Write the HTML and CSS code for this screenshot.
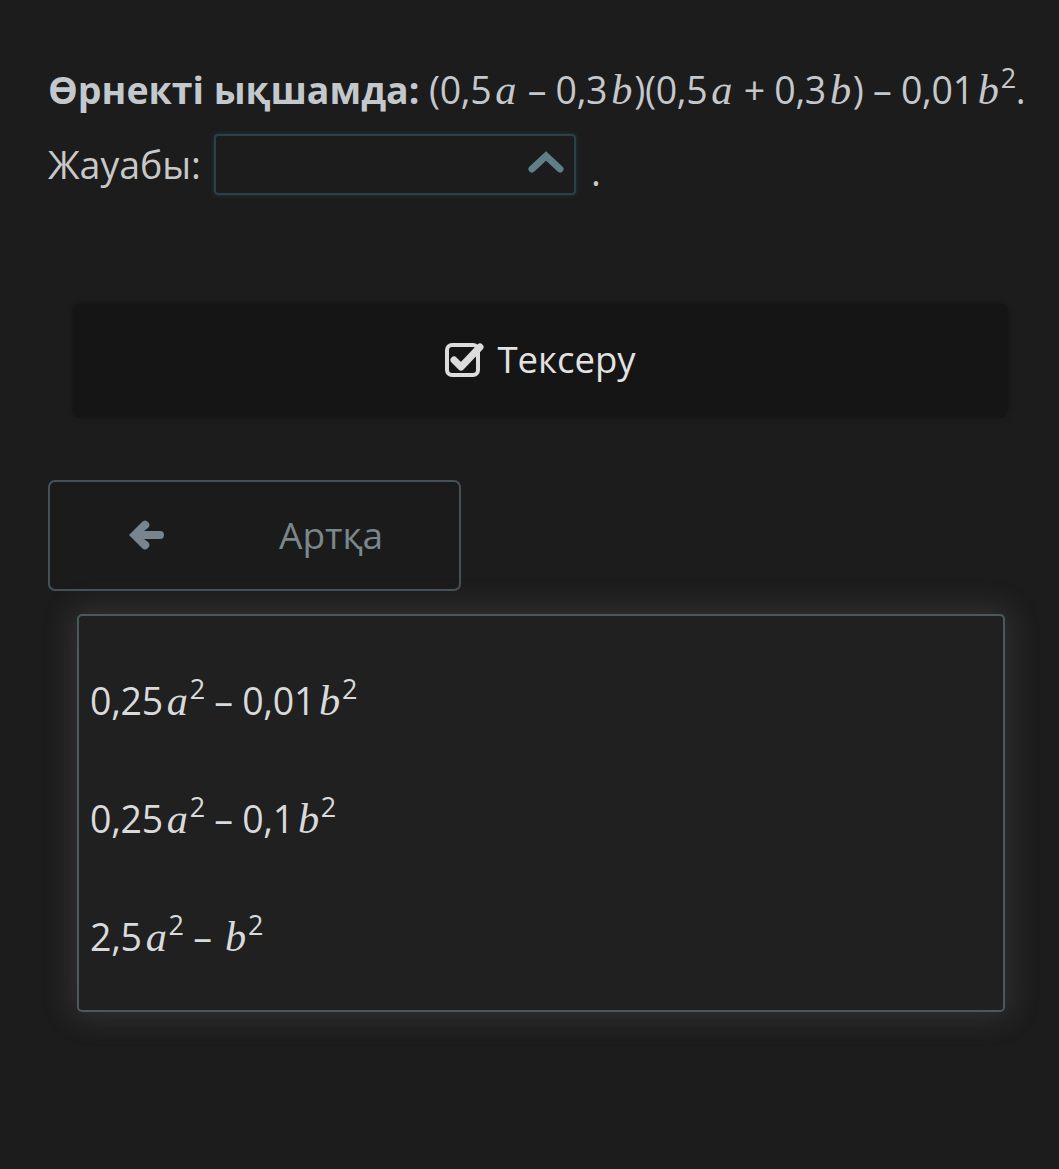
FILE: index.html
```html
<!DOCTYPE html>
<html lang="kk">
<head>
<meta charset="utf-8">
<link rel="stylesheet" href="styles.css">
</head>
<body>
<main class="page">
  <p class="question"><b class="q-label">Өрнекті ықшамда:</b> (0,5<i class="v">a</i> – 0,3<i class="v">b</i>)(0,5<i class="v">a</i> + 0,3<i class="v">b</i>) – 0,01<i class="v">b</i><sup>2</sup>.</p>
  <div class="answer">
    <span class="answer-label">Жауабы:</span>
    <div class="select">
      <svg class="chevron" width="36" height="24" viewBox="0 0 36 24"><path d="M4 19 L18 6 L32 19" fill="none" stroke="#5f7f88" stroke-width="7" stroke-linecap="round" stroke-linejoin="miter"/></svg>
    </div>
    <span class="dot">.</span>
  </div>
  <div class="check-wrap">
    <button class="check-btn">
      <svg class="check-icon" width="40" height="38" viewBox="0 0 40 38"><rect x="2" y="6" width="31" height="30" rx="5" fill="none" stroke="#dcdcdc" stroke-width="4"/><path d="M9 21 L16 28 L35 8" fill="none" stroke="#dcdcdc" stroke-width="7" stroke-linecap="round" stroke-linejoin="round"/></svg>
      <span>Тексеру</span>
    </button>
  </div>
  <button class="back-btn">
    <svg class="arrow" width="40" height="36" viewBox="0 0 40 36"><path d="M3 18 L16 5 Q19 2 22 5 Q25 8 22 11 L18 14 L34 14 Q38 14 38 18 Q38 22 34 22 L18 22 L22 25 Q25 28 22 31 Q19 34 16 31 Z" fill="#76858f"/></svg>
    <span class="back-text">Артқа</span>
  </button>
  <ul class="options">
    <li class="option"><span>0,25<i class="v">a</i><sup>2</sup> – 0,01<i class="v">b</i><sup>2</sup></span></li>
    <li class="option"><span>0,25<i class="v">a</i><sup>2</sup> – 0,1<i class="v">b</i><sup>2</sup></span></li>
    <li class="option"><span>2,5<i class="v">a</i><sup>2</sup> – <i class="v">b</i><sup>2</sup></span></li>
  </ul>
</main>
</body>
</html>
```
FILE: styles.css
```css
* { box-sizing: border-box; }
html, body { margin: 0; padding: 0; background: #1c1c1c; }
body {
  font-family: "Open Sans", "Noto Sans", sans-serif;
  color: #c6cacd;
  width: 1059px;
  height: 1169px;
  overflow: hidden;
}
.page { padding: 0 0 0 48px; }
.question {
  margin: 0;
  padding-top: 64px;
  font-size: 37.5px;
  line-height: 52px;
  color: #c4c8cc;
  white-space: nowrap;
  letter-spacing: -0.3px;
}
.q-label { font-weight: 700; color: #c3c8cd; letter-spacing: 0; }
.v {
  font-family: "Liberation Serif", "DejaVu Serif", serif;
  font-style: italic;
  font-size: 1.13em;
  padding: 0 2px 0 4px;
}
sup { font-size: 0.72em; line-height: 0; vertical-align: 0.6em; }
.answer {
  display: flex;
  align-items: center;
  margin-top: 17px;
  height: 62px;
}
.answer-label { font-size: 37.5px; color: #c8c8c8; margin-right: 13px; }
.select {
  width: 362px;
  height: 61px;
  border: 2px solid #284247;
  border-radius: 4px;
  box-shadow: 0 0 4px rgba(40, 80, 90, 0.6);
  display: flex;
  align-items: center;
  justify-content: flex-end;
  padding-right: 10px;
}
.chevron { margin-top: -4px; }
.dot { font-size: 37.5px; margin-left: 15px; margin-top: 14px; color: #c8c8c8; }
.check-wrap { padding: 109px 51px 0 25px; }
.check-btn {
  width: 935px;
  height: 113px;
  background: #151515;
  border: none;
  border-radius: 8px;
  box-shadow: 0 0 6px rgba(0, 0, 0, 0.35);
  display: flex;
  align-items: center;
  justify-content: center;
  gap: 12px;
  font-family: "Open Sans", "Noto Sans", sans-serif;
  font-size: 36.5px;
  color: #e2e2e2;
  padding: 0 0 4px 0;
}
.check-icon { margin-top: -1px; }
.back-btn {
  margin-top: 63px;
  width: 413px;
  height: 111px;
  background: #1b1b1b;
  border: 2px solid #465157;
  border-radius: 7px;
  display: flex;
  align-items: center;
  padding: 0 0 2px 76px;
  font-family: "Open Sans", "Noto Sans", sans-serif;
  font-size: 37px;
  color: #7a878d;
}
.back-text { margin-left: 113px; }
.options {
  list-style: none;
  margin: 23px 0 0 29px;
  width: 928px;
  height: 398px;
  padding: 25px 0 17px 11px;
  background: #202020;
  border: 2px solid #4a5a5c;
  border-radius: 5px;
  box-shadow: 0 0 30px 6px rgba(140, 140, 140, 0.2);
}
.option {
  height: 118px;
  display: flex;
  align-items: center;
  font-size: 37.5px;
  color: #d8dadc;
  white-space: pre;
  letter-spacing: -0.3px;
}
```
